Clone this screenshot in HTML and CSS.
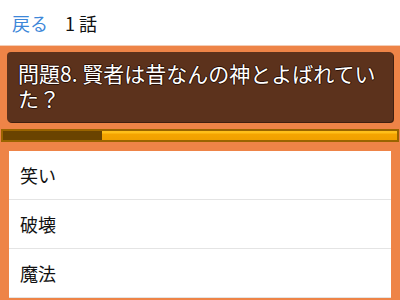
FILE: index.html
```html
<!DOCTYPE html>
<html lang="ja">
<head>
<meta charset="utf-8">
<link rel="stylesheet" href="styles.css">
</head>
<body>
<header class="topbar">
  <span class="back">戻る</span>
  <span class="title">1 話</span>
</header>
<main class="stage">
  <div class="question">問題8. 賢者は昔なんの神とよばれていた？</div>
  <div class="timer"><div class="timer-fill" style="width:75%"></div></div>
  <ul class="choices">
    <li class="choice">笑い</li>
    <li class="choice">破壊</li>
    <li class="choice">魔法</li>
  </ul>
</main>
</body>
</html>
```

FILE: styles.css
```css
html, body {
  margin: 0;
  padding: 0;
  height: 100%;
  overflow: hidden;
}
body {
  font-family: "Noto Sans CJK JP", "Noto Sans", sans-serif;
  background: #ee8447;
}
.topbar {
  height: 45px;
  background: #fff;
  border-bottom: 1px solid #f4cdb6;
  display: flex;
  align-items: center;
  gap: 17px;
  padding: 0 0 0 12px;
  font-size: 18px;
  line-height: 1;
  box-sizing: content-box;
}
.back {
  color: #3d87d9;
}
.title {
  color: #111;
}
.stage {
  display: flex;
  flex-direction: column;
}
.question {
  margin: 6px 7px 0 7px;
  background: #5c321c;
  border-radius: 4px;
  box-shadow: 1px 1px 0 #3f2010;
  padding: 9px 10px 11px 11px;
  color: #fff;
  font-size: 21px;
  line-height: 25px;
  height: 50px;
  overflow: hidden;
  text-shadow: -1px 0 0 #2a1006, 1px 0 0 #2a1006, 0 -1px 0 #2a1006, 0 1px 0 #2a1006;
}
.timer {
  margin: 7px 1px 0 1px;
  height: 9px;
  border: 2px solid #9a6400;
  background: #6a4300;
  display: flex;
  justify-content: flex-end;
}
.timer-fill {
  height: 100%;
  background: linear-gradient(#ffbf1a 0, #ffbf1a 2px, #f5a400 3px, #f0a000 100%);
}
.choices {
  list-style: none;
  margin: 9px 9px 0 9px;
  padding: 0;
  background: #fff;
}
.choice {
  height: 48px;
  display: flex;
  align-items: center;
  padding-left: 11px;
  font-size: 18px;
  color: #111;
  border-bottom: 1px solid #e4e4e4;
}
```
